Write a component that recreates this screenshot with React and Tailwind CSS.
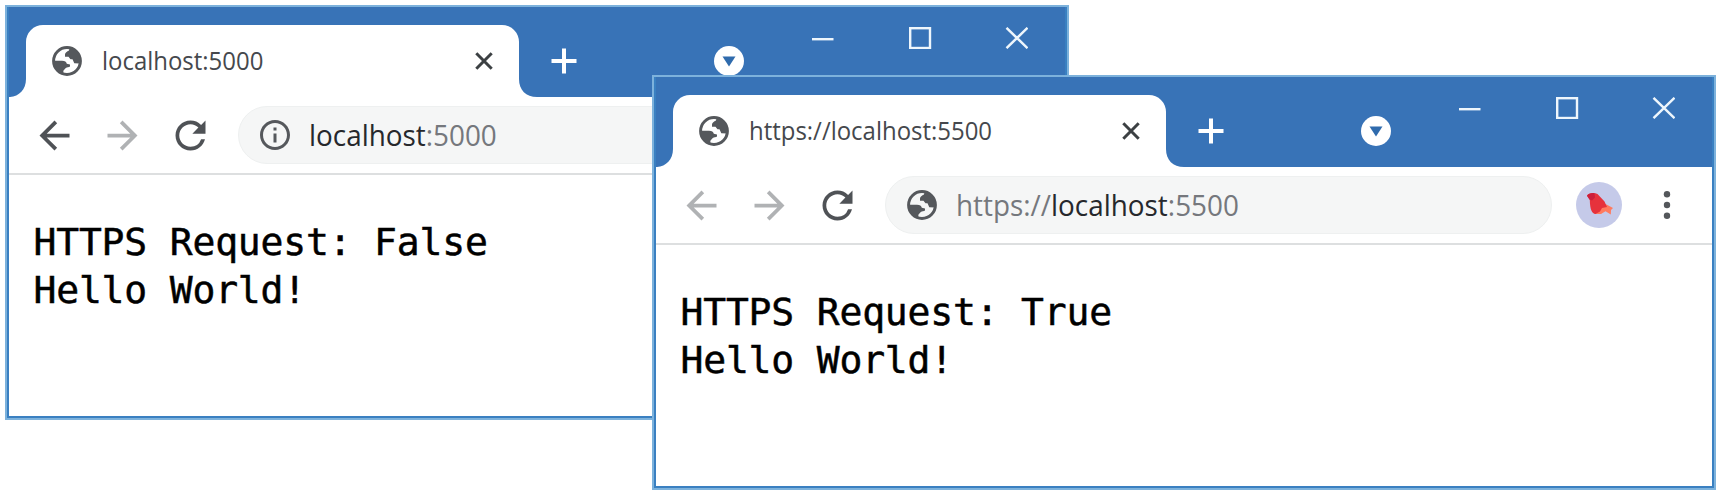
import { MdArrowBack, MdArrowForward, MdRefresh, MdInfoOutline } from "react-icons/md";

function Globe() {
  return (
    <svg viewBox="0 0 30 30" className="h-[30px] w-[30px] shrink-0">
      <circle cx="15" cy="15" r="13.4" fill="none" stroke="#55585c" strokeWidth="3" />
      <path
        fill="#55585c"
        d="M1.5 14.8H10C13 14.8 14.3 16 14.8 17.8L18 18.5V20.5C17 21.6 15 21.2 13.8 22L11.5 24.500L11 28C5 26 1.5 21 1.5 14.8ZM17.500 2L17 4.500C15 5.500 13 6.500 13 8.500V10.800H16.500L18.500 13.200H20.500L22.300 17.200L28 17.500C30 10 25 3 17.500 2Z"
      />
    </svg>
  );
}

function Bird() {
  return (
    <svg viewBox="0 0 46 46" className="ml-6 h-[46px] w-[46px] shrink-0">
      <circle cx="23" cy="23" r="23" fill="#c5cae9" />
      <path fill="#ff7a5e" d="M24 21L30.5 22.5L37 26L35 28L34.800 32.500L29.500 29.300L25 32L18.500 32Z" />
      <path fill="#e6323c" d="M11 13.800C12 11 18 10 21.500 12L28.500 19.500L31 25L26 26L24 29.500L19.500 32C16 31.500 14 28 13.800 18Z" />
      <path fill="#cc1f3a" d="M11 13.800C12 11 18 10.500 18.500 11.500L19 15.500L16 18.500L13.600 17.500Z" />
    </svg>
  );
}

function TitleBar({ title }) {
  return (
    <div className="flex h-[90px] bg-[#3873b7]">
      <div className="flex w-[17px] shrink-0 items-end">
        <svg viewBox="0 0 17 18" className="h-[18px] w-[17px]">
          <path fill="#fff" d="M17 0C17 10.500 10 17.500 1 18H17Z" />
        </svg>
      </div>
      <div className="mt-[18px] flex h-[72px] w-[492.500px] shrink-0 items-center rounded-t-[17px] bg-white pl-[26px] pr-[26px]">
        <Globe />
        <div className="-mt-[2px] ml-[19.500px] flex-1 whitespace-nowrap font-['Open_Sans',sans-serif] text-[26px] leading-[36px] text-[#45484d]">
          <span className="inline-block origin-left scale-x-[0.921]">{title}</span>
        </div>
        <svg viewBox="0 0 18 18" className="h-[18px] w-[18px]">
          <path d="M1.300 1.300L16.700 16.700M16.700 1.300L1.300 16.700" stroke="#3c4043" strokeWidth="3" />
        </svg>
      </div>
      <div className="flex w-[18px] shrink-0 items-end">
        <svg viewBox="0 0 18 18" className="h-[18px] w-[18px]">
          <path fill="#fff" d="M0 0C0 11 7 18 18 18H0Z" />
        </svg>
      </div>
      <svg viewBox="0 0 26 26" className="ml-[14.500px] mt-[41px] h-[26px] w-[26px] shrink-0">
        <path d="M13 0.500V25.500M0.500 13H25.500" stroke="#fff" strokeWidth="4" />
      </svg>
      <svg viewBox="0 0 30 30" className="ml-[137px] mt-[39px] h-[30px] w-[30px] shrink-0">
        <circle cx="15" cy="15" r="15" fill="#fff" />
        <path d="M8.500 10.500H21.500L15 20.500Z" fill="#2f6bad" />
      </svg>
      <svg viewBox="0 0 216 22" className="ml-[68px] mt-5 h-[22px] w-[216px] shrink-0" fill="none" stroke="#eef6fc" strokeWidth="2.400">
        <path d="M0 12.200H21.500" />
        <rect x="98.200" y="1.200" width="19.800" height="19.800" />
        <path d="M194.500 0.800L215.500 21.200M215.500 0.800L194.500 21.200" />
      </svg>
    </div>
  );
}

function Browser({ title, back, site, children, lines }) {
  return (
    <div className="h-[415px] w-[1064px] border-2 border-[#7db2dc] bg-white">
      <div className="flex h-full flex-col border-2 border-t-0 border-[#3a80c1]">
        <TitleBar title={title} />
        <div className="flex h-[78px] shrink-0 items-center border-b-2 border-[#dddfe0] pl-[23px]">
          <MdArrowBack className={"h-[45px] w-[45px] shrink-0 " + back} />
          <MdArrowForward className="ml-[23px] h-[45px] w-[45px] shrink-0 text-[#b0b2b4]" />
          <MdRefresh className="ml-[22.500px] h-[45px] w-[45px] shrink-0 text-[#4f5256]" />
          <div className="ml-[25px] flex h-[58px] w-[667px] shrink-0 items-center rounded-full border border-[#eef0f0] bg-[#f5f6f6] pl-[21px]">
            {site}
            <div className="ml-[19.500px] whitespace-nowrap font-['Open_Sans',sans-serif] text-[29px] leading-[40px] text-[#75787d]">
              <span className="inline-block origin-left scale-x-[0.961]">{children}</span>
            </div>
          </div>
          <Bird />
          <svg viewBox="0 0 8 28" className="ml-[41px] h-[28px] w-[8px]" fill="#54575b">
            <circle cx="4" cy="3.300" r="3.200" />
            <circle cx="4" cy="14" r="3.200" />
            <circle cx="4" cy="24.700" r="3.200" />
          </svg>
        </div>
        <div className="pl-[24.500px] pt-[42.500px] font-['DejaVu_Sans_Mono',monospace] text-[38px] tracking-[-0.17px] text-black [-webkit-text-stroke:0.5px_black]">
          {lines.map((l) => (
            <div key={l} className="whitespace-pre leading-[48px]">
              {l}
            </div>
          ))}
        </div>
      </div>
    </div>
  );
}

export default function App() {
  return (
    <div className="relative h-[495px] w-[1722px] overflow-hidden bg-white">
      <div className="absolute left-[5px] top-[5px]">
        <Browser
          title="localhost:5000"
          back="text-[#4f5256]"
          site={<MdInfoOutline className="-mx-[3px] h-[36px] w-[36px] shrink-0 text-[#55585c]" />}
          lines={["HTTPS Request: False", "Hello World!"]}
        >
          <span className="text-[#26282c]">localhost</span>:5000
        </Browser>
      </div>
      <div className="absolute left-[652px] top-[75px]">
        <Browser
          title="https://localhost:5500"
          back="text-[#b0b2b4]"
          site={<Globe />}
          lines={["HTTPS Request: True", "Hello World!"]}
        >
          https://<span className="text-[#26282c]">localhost</span>:5500
        </Browser>
      </div>
    </div>
  );
}
